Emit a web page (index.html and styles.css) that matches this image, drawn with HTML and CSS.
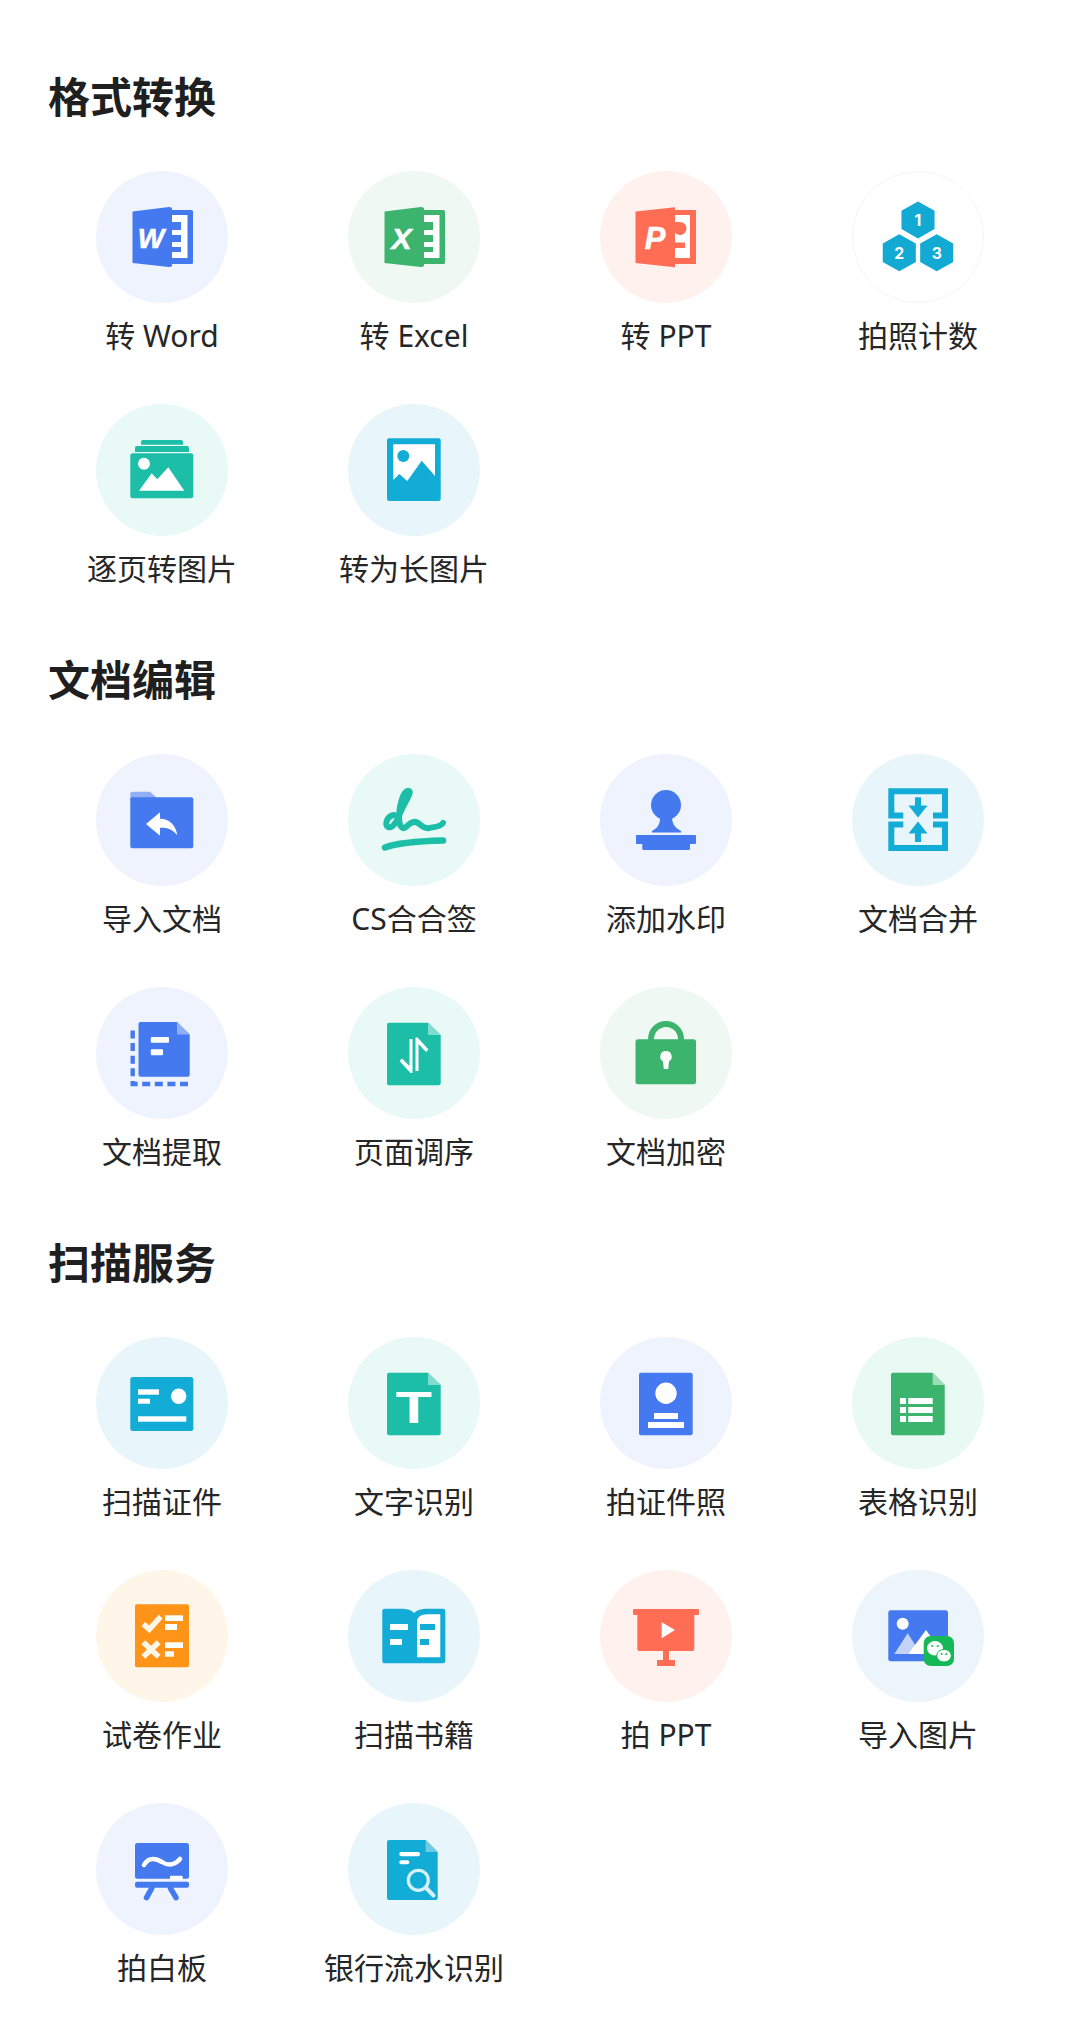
FILE: index.html
```html
<!DOCTYPE html>
<html lang="zh-CN">
<head>
    <meta charset="UTF-8">
    <meta name="viewport" content="width=device-width, initial-scale=1.0">
    <title>全部工具</title>
    <link rel="stylesheet" href="styles.css">
</head>
<body>
    <section class="group">
        <h2>格式转换</h2>
        <div class="tools">
            <a class="tool blue">
                <svg class="icon" viewBox="-1 -1 132 132">
                    <path class="ink" d="M74 38H94.5Q96 38 96 39.5V90.5Q96 92 94.5 92H74Z"/>
                    <path class="pale" d="M75 43H90.5V86H75V80H84V75H75V70H84V63H75V58H84V50H75Z"/>
                    <path class="ink" d="M35.5 39.5L72 35Q75 35 75 37V93Q75 95 72 95L35.5 91Z"/>
                    <text class="logo-letter" x="54" y="75.5" font-size="28">W</text>
                </svg>
                <span>转 Word</span>
            </a>
            <a class="tool green">
                <svg class="icon" viewBox="-1 -1 132 132">
                    <path class="ink" d="M74 38H94.5Q96 38 96 39.5V90.5Q96 92 94.5 92H74Z"/>
                    <path class="pale" d="M75 43H90.5V86H75V80H84V75H75V70H84V63H75V58H84V50H75Z"/>
                    <path class="ink" d="M35.5 39.5L72 35Q75 35 75 37V93Q75 95 72 95L35.5 91Z"/>
                    <text class="logo-letter" x="52.5" y="76.5" font-size="30">X</text>
                </svg>
                <span>转 Excel</span>
            </a>
            <a class="tool red">
                <svg class="icon" viewBox="-1 -1 132 132">
                    <rect class="ink" x="72" y="38" width="23" height="54"/>
                    <rect class="pale" x="73" y="43" width="16" height="43"/>
                    <path class="ink" d="M79 50A6.5 6.5 0 1 1 73 59V50Z"/>
                    <rect class="ink" x="73" y="70.5" width="11" height="5.5"/>
                    <path class="ink" d="M34.5 39.5L74 35.3V95.3L34.5 91Z"/>
                    <text class="logo-letter" x="54" y="77" font-size="31">P</text>
                </svg>
                <span>转 PPT</span>
            </a>
            <a class="tool plain">
                <svg class="icon" viewBox="-1 -1 132 132">
                    <polygon class="ink" points="65,29 81.8,38.3 81.8,57 65,66.4 48.2,57 48.2,38.3"/>
                    <polygon class="ink" points="46,62.3 62.8,71.6 62.8,90.3 46,99.7 29.2,90.3 29.2,71.6"/>
                    <polygon class="ink" points="84,62.3 100.8,71.6 100.8,90.3 84,99.7 67.2,90.3 67.2,71.6"/>
                    <text class="digit" x="65" y="53.5">1</text>
                    <text class="digit" x="46" y="87">2</text>
                    <text class="digit" x="84" y="87">3</text>
                </svg>
                <span>拍照计数</span>
            </a>
            <a class="tool teal">
                <svg class="icon" viewBox="-1 -1 132 132">
                    <path class="ink" d="M44 39.7V37Q44 35 46 35H84Q86 35 86 37V39.7Z"/>
                    <path class="ink" d="M38 47V43Q38 41 40 41H90Q92 41 92 43V47Z"/>
                    <rect class="ink" x="33.3" y="48.3" width="63" height="45" rx="2.5"/>
                    <circle class="pale" cx="47" cy="58.7" r="6"/>
                    <polygon class="pale" points="42,85.7 54.7,68.3 60.3,74.3 71.3,62.3 87.3,85.7"/>
                </svg>
                <span>逐页转图片</span>
            </a>
            <a class="tool cyan">
                <svg class="icon" viewBox="-1 -1 132 132">
                    <rect class="ink" x="38" y="33.3" width="53.7" height="62.7" rx="2"/>
                    <polygon class="pale" points="44.3,39.3 86,39.3 86,71 72.7,55.7 58.3,76 50.3,69 44.3,75"/>
                    <circle class="ink" cx="54.3" cy="51" r="6"/>
                </svg>
                <span>转为长图片</span>
            </a>
        </div>
    </section>

    <section class="group">
        <h2>文档编辑</h2>
        <div class="tools">
            <a class="tool blue">
                <svg class="icon" viewBox="-1 -1 132 132">
                    <path class="soft" d="M33.3 45V38.7Q33.3 36.7 35.3 36.7H53L60 43V45Z"/>
                    <rect class="ink" x="33.3" y="42.3" width="63" height="51" rx="2"/>
                    <path class="pale" d="M49 69L63 57.3V63.7C73 63.7 79 71 80.3 80C75 74 70 72.5 63 72.7V80.7Z"/>
                </svg>
                <span>导入文档</span>
            </a>
            <a class="tool teal">
                <svg class="icon" viewBox="-1 -1 132 132">
                    <path class="line" stroke-width="6" d="M45 60C38 61 35 70 39 72C44 74 48 66 52 56C56 47 63 37 60 36C55 34 50 50 50 62C50 70 53 76 57 72C61 68 65 65 69 68C73 71 75 74 80 73C84 72 92 72 94 68"/>
                    <path class="line" stroke-width="6.5" d="M36 92.5C50 87 75 86 94 85.5"/>
                </svg>
                <span>CS合合签</span>
            </a>
            <a class="tool blue">
                <svg class="icon" viewBox="-1 -1 132 132">
                    <circle class="ink" cx="65" cy="50" r="15"/>
                    <path class="ink" d="M58.5 58C60 68 58 72 51 76V77.5H80V76C73 72 70 68 71.5 58Z"/>
                    <rect class="ink" x="35" y="80" width="60" height="9" rx="1"/>
                    <path class="ink" d="M41.3 89H89V93.5Q89 95 87.5 95H42.8Q41.3 95 41.3 93.5Z"/>
                </svg>
                <span>添加水印</span>
            </a>
            <a class="tool cyan">
                <svg class="icon" viewBox="-1 -1 132 132">
                    <path class="line square" stroke-width="6" d="M50.3 60.5H38.3V36.3H92V60.5H80"/>
                    <path class="line square" stroke-width="6" d="M50.3 69.5H38.3V93H92V69.5H80"/>
                    <polygon class="ink" points="62,42.3 68,42.3 68,50.5 74.5,50.5 65,62.5 55.5,50.5 62,50.5"/>
                    <polygon class="ink" points="65,66.5 74.5,78.5 68,78.5 68,87 62,87 62,78.5 55.5,78.5"/>
                </svg>
                <span>文档合并</span>
            </a>
            <a class="tool blue">
                <svg class="icon" viewBox="-1 -1 132 132">
                    <path class="ink" d="M43.5 34H80L92.7 46.5V86.7Q92.7 88.7 90.7 88.7H43.5Q41.5 88.7 41.5 86.7V36Q41.5 34 43.5 34Z"/>
                    <path class="soft" d="M80 34L92.7 46.5H80Z"/>
                    <rect class="pale" x="53.8" y="49" width="18.2" height="5.7" rx="1"/>
                    <rect class="pale" x="53.8" y="61.3" width="12.2" height="6" rx="1"/>
                    <path class="line square dotted" stroke-width="4.4" d="M35.7 42.5V96H91"/>
                </svg>
                <span>文档提取</span>
            </a>
            <a class="tool teal">
                <svg class="icon" viewBox="-1 -1 132 132">
                    <path class="ink" d="M40 34.7H79L91.7 47V95.3Q91.7 97.3 89.7 97.3H40Q38 97.3 38 95.3V36.7Q38 34.7 40 34.7Z"/>
                    <path class="soft" d="M79 34.7L91.7 47H79Z"/>
                    <path class="pale" d="M63.5 51V85H61.5L50.5 73L53 70.5L60.5 78V51Z"/>
                    <path class="pale" d="M66.5 83V49.5H68.5L79.5 61.5L77 64L69.5 56V83Z"/>
                </svg>
                <span>页面调序</span>
            </a>
            <a class="tool green">
                <svg class="icon" viewBox="-1 -1 132 132">
                    <path class="line" stroke-width="6" d="M50 54V51A15 15 0 0 1 80 51V54"/>
                    <rect class="ink" x="34.5" y="51.3" width="60.5" height="45" rx="2.5"/>
                    <path class="pale" d="M65 63A5.6 5.6 0 0 1 68 73.4L67.2 81H62.8L62 73.4A5.6 5.6 0 0 1 65 63Z"/>
                </svg>
                <span>文档加密</span>
            </a>
        </div>
    </section>

    <section class="group">
        <h2>扫描服务</h2>
        <div class="tools">
            <a class="tool cyan">
                <svg class="icon" viewBox="-1 -1 132 132">
                    <rect class="ink" x="33.3" y="39" width="63" height="54" rx="2.5"/>
                    <rect class="pale" x="41" y="51.3" width="21" height="5.4"/>
                    <rect class="pale" x="41" y="60.7" width="12" height="5"/>
                    <circle class="pale" cx="81.7" cy="58.3" r="7.7"/>
                    <rect class="pale" x="41" y="78.3" width="48.3" height="5.4"/>
                </svg>
                <span>扫描证件</span>
            </a>
            <a class="tool teal">
                <svg class="icon" viewBox="-1 -1 132 132">
                    <path class="ink" d="M40 34.7H79L91.7 47V95.3Q91.7 97.3 89.7 97.3H40Q38 97.3 38 95.3V36.7Q38 34.7 40 34.7Z"/>
                    <path class="soft" d="M79 34.7L91.7 47H79Z"/>
                    <text class="logo-letter upright" x="65" y="85.3" font-size="45" textLength="36.3" lengthAdjust="spacingAndGlyphs">T</text>
                </svg>
                <span>文字识别</span>
            </a>
            <a class="tool blue">
                <svg class="icon" viewBox="-1 -1 132 132">
                    <rect class="ink" x="38" y="34.7" width="53.7" height="62.6" rx="2"/>
                    <circle class="pale" cx="65" cy="55.3" r="10.7"/>
                    <rect class="pale" x="53" y="75" width="24" height="6"/>
                    <rect class="pale" x="47" y="84" width="36" height="6"/>
                </svg>
                <span>拍证件照</span>
            </a>
            <a class="tool mint">
                <svg class="icon" viewBox="-1 -1 132 132">
                    <path class="ink" d="M40 34.7H79.7L91.7 47V95.3Q91.7 97.3 89.7 97.3H40Q38 97.3 38 95.3V36.7Q38 34.7 40 34.7Z"/>
                    <path class="soft" d="M79.7 34.7L91.7 47H79.7Z"/>
                    <rect class="pale" x="47" y="60" width="6" height="6"/>
                    <rect class="pale" x="55.3" y="60" width="24.4" height="6"/>
                    <rect class="pale" x="47" y="69" width="6" height="6"/>
                    <rect class="pale" x="55.3" y="69" width="24.4" height="6"/>
                    <rect class="pale" x="47" y="78" width="6" height="6"/>
                    <rect class="pale" x="55.3" y="78" width="24.4" height="6"/>
                </svg>
                <span>表格识别</span>
            </a>
            <a class="tool orange">
                <svg class="icon" viewBox="-1 -1 132 132">
                    <rect class="ink" x="38" y="33.3" width="54" height="63" rx="2"/>
                    <path class="line-pale" stroke-width="5.5" d="M46.3 53L52.3 58.3L63.7 45.7"/>
                    <rect class="pale" x="68" y="44.3" width="18" height="5.7"/>
                    <rect class="pale" x="68" y="53" width="12" height="6"/>
                    <path class="line-pale" stroke-width="5.5" d="M46.3 71.3L61.7 85.7M61.7 71.3L46.3 85.7"/>
                    <rect class="pale" x="68" y="71.3" width="18" height="5.7"/>
                    <rect class="pale" x="68" y="80.3" width="9" height="5.4"/>
                </svg>
                <span>试卷作业</span>
            </a>
            <a class="tool cyan">
                <svg class="icon" viewBox="-1 -1 132 132">
                    <path class="ink" d="M33.3 40Q33.3 37.7 36 37.7H54Q62 38 65 42Q69 38 76 37.7H94Q96.3 37.7 96.3 40V90Q96.3 92.3 94 92.3H36Q33.3 92.3 33.3 90Z"/>
                    <path class="pale" d="M68 49Q70 43.5 78 43.3H91.3V86.3H68Z"/>
                    <rect class="pale" x="41" y="53" width="18" height="6"/>
                    <rect class="pale" x="41" y="68" width="12" height="6"/>
                    <rect class="ink" x="71" y="53" width="15" height="6"/>
                    <rect class="ink" x="71" y="68" width="9" height="6"/>
                </svg>
                <span>扫描书籍</span>
            </a>
            <a class="tool red">
                <svg class="icon" viewBox="-1 -1 132 132">
                    <rect class="ink" x="32" y="38" width="66" height="6" rx="1"/>
                    <path class="ink" d="M36.3 44H93.3V78Q93.3 80 91.3 80H38.3Q36.3 80 36.3 78Z"/>
                    <polygon class="pale" points="60.7,51.3 74,59 60.7,67.3"/>
                    <rect class="ink" x="62" y="80" width="6" height="9"/>
                    <rect class="ink" x="56" y="89" width="18" height="6"/>
                </svg>
                <span>拍 PPT</span>
            </a>
            <a class="tool sky">
                <svg class="icon" viewBox="-1 -1 132 132">
                    <rect class="ink" x="35.3" y="39.3" width="59.7" height="51" rx="2.5"/>
                    <circle class="pale" cx="49.7" cy="52.7" r="6"/>
                    <polygon class="soft" points="41.3,83 54.7,62.3 68,83"/>
                    <polygon class="pale" points="55.3,83 73,59 90,83"/>
                    <rect class="wechat" x="70.7" y="65" width="30.3" height="30" rx="7"/>
                    <ellipse class="pale" cx="82" cy="77.3" rx="8" ry="7.3"/>
                    <ellipse class="pale wechat-edge" cx="91" cy="84.7" rx="7.3" ry="6.3"/>
                    <circle class="wechat-eye" cx="79.3" cy="75" r="1"/>
                    <circle class="wechat-eye" cx="84.7" cy="75" r="1"/>
                    <circle class="wechat-eye" cx="88.7" cy="83" r="1"/>
                    <circle class="wechat-eye" cx="93.3" cy="83" r="1"/>
                </svg>
                <span>导入图片</span>
            </a>
            <a class="tool blue">
                <svg class="icon" viewBox="-1 -1 132 132">
                    <rect class="ink" x="38" y="39" width="54" height="35.7" rx="2.5"/>
                    <path class="line-pale round" stroke-width="4.5" d="M47 61C52 52 60 55 65 58C71 62 78 61 83 55"/>
                    <rect class="pale" x="73" y="71.7" width="12.7" height="4" rx="1"/>
                    <rect class="ink" x="38" y="77.7" width="54" height="6" rx="2"/>
                    <path class="line" stroke-width="5.5" d="M54.7 84.3L49.5 93.7M73.5 84.3L79 93.7"/>
                </svg>
                <span>拍白板</span>
            </a>
            <a class="tool cyan">
                <svg class="icon" viewBox="-1 -1 132 132">
                    <path class="ink" d="M40 36H76.7L88.7 48V94Q88.7 96 86.7 96H40Q38 96 38 94V38Q38 36 40 36Z"/>
                    <path class="soft" d="M76.7 36L88.7 48H76.7Z"/>
                    <rect class="pale" x="50.3" y="48" width="20.7" height="4.3" rx="2"/>
                    <rect class="pale" x="50.3" y="56.3" width="10" height="4" rx="2"/>
                    <circle class="glass" cx="69.3" cy="76.3" r="10" stroke-width="3.2"/>
                    <path class="glass round" stroke-width="4" d="M77.7 84.5L84.5 91.5"/>
                </svg>
                <span>银行流水识别</span>
            </a>
        </div>
    </section>
</body>
</html>
```

FILE: styles.css
```css
* {
    margin: 0;
    padding: 0;
    box-sizing: border-box;
}

body {
    background: #fff;
    color: #262626;
    font-family: "Noto Sans", "Noto Sans CJK SC", sans-serif;
    padding: 69px 36px 0;
}

.group {
    margin-bottom: 62px;
}

.group h2 {
    font-size: 42px;
    line-height: 56px;
    font-weight: 700;
    color: #1f1f1f;
    margin: 0 0 46px 12px;
}

.tools {
    display: grid;
    grid-template-columns: repeat(4, 1fr);
    row-gap: 47px;
}

.tool {
    display: flex;
    flex-direction: column;
    align-items: center;
    gap: 12px;
    color: inherit;
    text-decoration: none;
}

.tool span {
    font-size: 30px;
    line-height: 42px;
    white-space: nowrap;
}

.icon {
    display: block;
    width: 132px;
    height: 132px;
    border-radius: 50%;
    background: var(--tint);
}

/* one tint and one ink per tool colour */
.blue { --tint: #eff3fd; --ink: #4479ef; --soft: #90aff6; }
.green { --tint: #eff8f3; --ink: #3cb46e; --soft: #8ed4a9; }
.mint { --tint: #e9f9f3; --ink: #3cb46e; --soft: #9ddcb8; }
.red { --tint: #fff1ee; --ink: #ff6e54; --soft: #ffb2a3; }
.teal { --tint: #e8f9f6; --ink: #1dbea8; --soft: #7fdccf; }
.cyan { --tint: #e8f6fb; --ink: #12acd6; --soft: #6ecbe6; }
.orange { --tint: #fff5e9; --ink: #ff9418; --soft: #ffc98a; }
.sky { --tint: #ecf4fc; --ink: #4479ef; --soft: #c3d3f8; }
.plain { --tint: #fff; --ink: #12a9d3; --soft: #6ecbe6; }

.plain .icon {
    border: 1px solid #f5f5f5;
}

.ink { fill: var(--ink); }
.soft { fill: var(--soft); }
.pale { fill: #fff; }

.line, .line-pale, .glass {
    fill: none;
    stroke-linecap: round;
    stroke-linejoin: round;
}

.line { stroke: var(--ink); }
.line.square { stroke-linecap: butt; stroke-linejoin: miter; }
.line.dotted { stroke-dasharray: 8 4.6; }

.line-pale {
    stroke: #fff6e8;
    stroke-linecap: butt;
    stroke-linejoin: miter;
}

.line-pale.round { stroke: #fff; stroke-linecap: round; }

.glass { stroke: #d6f2f9; }

.logo-letter {
    fill: #fff;
    stroke: #fff;
    stroke-width: 0.6;
    font-family: "Liberation Sans", sans-serif;
    font-weight: 700;
    font-style: italic;
    text-anchor: middle;
}

.logo-letter.upright { font-style: normal; stroke: none; }

.digit {
    fill: #fff;
    font-family: "Inter", sans-serif;
    font-size: 16px;
    font-weight: 700;
    text-anchor: middle;
}

.wechat { fill: #14b856; }
.wechat-edge { stroke: #14b856; stroke-width: 1; }
.wechat-eye { fill: #14b856; }
```
